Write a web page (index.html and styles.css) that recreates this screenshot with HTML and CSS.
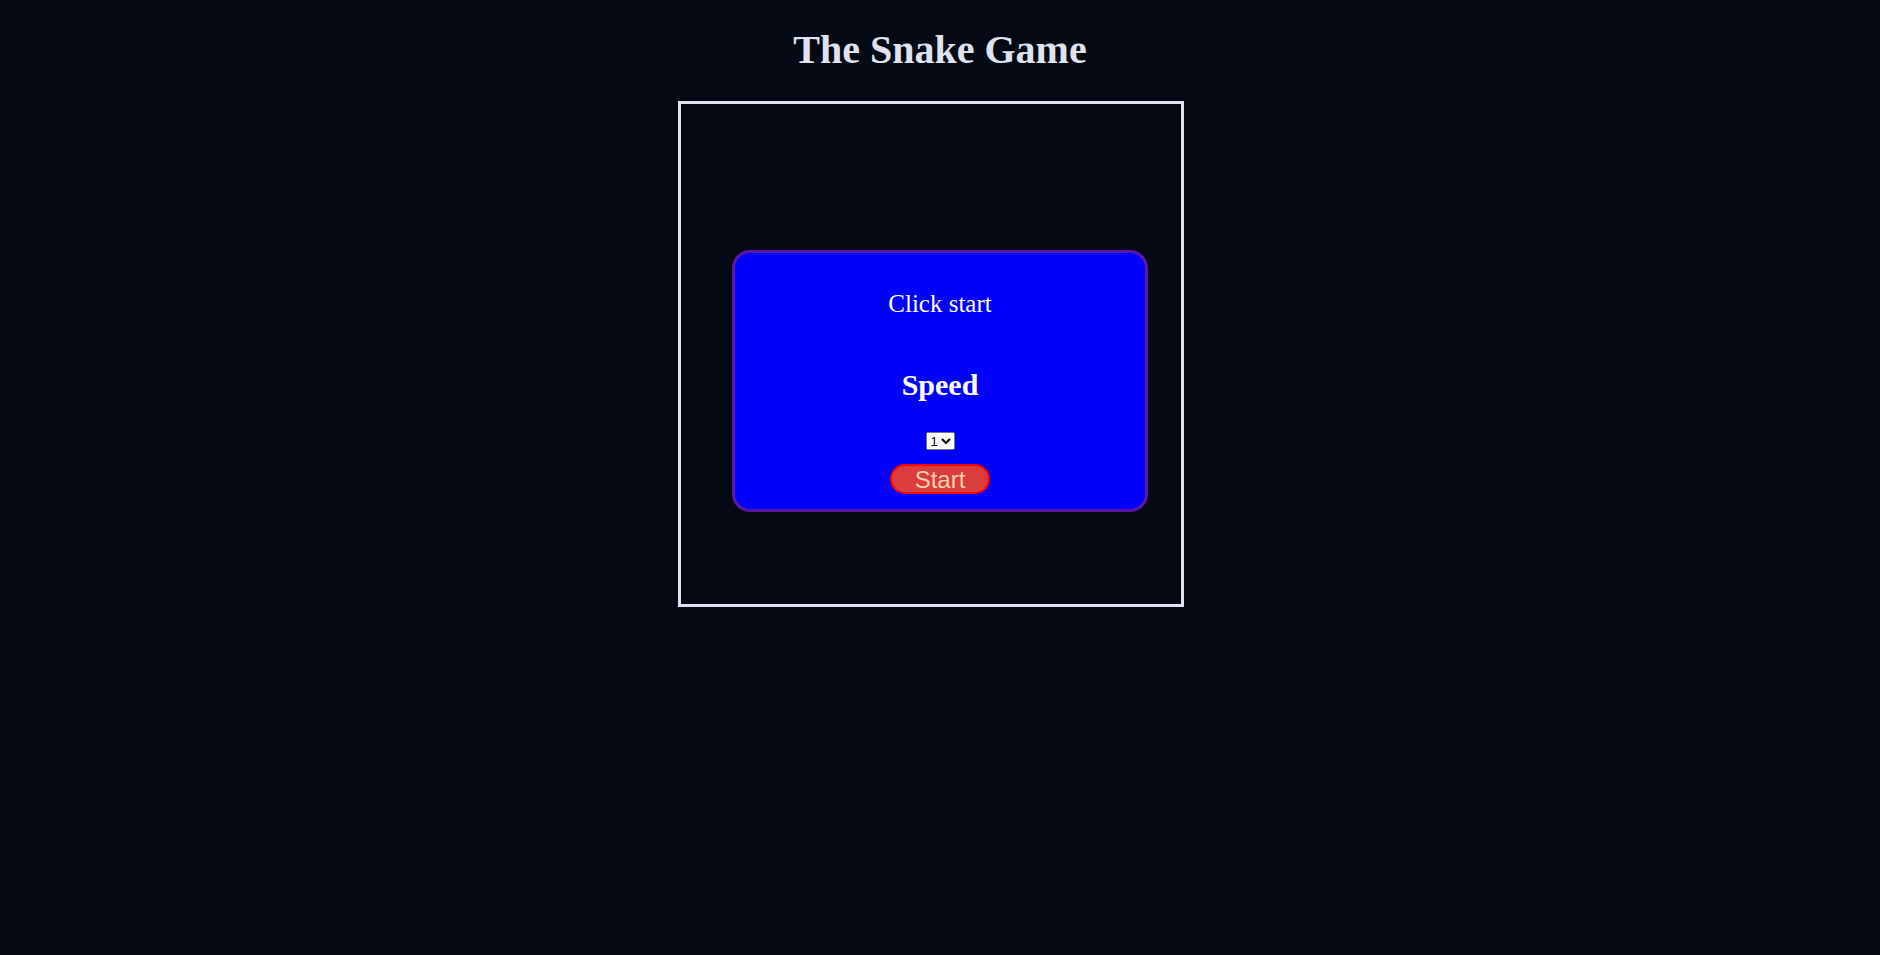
FILE: index.html
```html
<!DOCTYPE html>
<html lang="en">
<head>
<meta charset="utf-8">
<title>The Snake Game</title>
<link rel="stylesheet" href="styles.css">
</head>
<body>
<h1 class="title">The Snake Game</h1>
<div class="stage">
  <div class="board"></div>
  <div class="overlay">
    <p class="message">Click start</p>
    <h2 class="speed-label">Speed</h2>
    <select class="speed-select">
      <option>1</option>
      <option>2</option>
      <option>3</option>
    </select>
    <button class="start-btn">Start</button>
  </div>
</div>
</body>
</html>
```

FILE: styles.css
```css
html, body {
  margin: 0;
  padding: 0;
}
body {
  background: #050913;
  font-family: "Liberation Serif", "Times New Roman", serif;
  color: #dfe3ef;
  min-height: 955px;
}
.title {
  margin: 0;
  padding-top: 27px;
  padding-bottom: 28px;
  font-size: 40px;
  font-weight: bold;
  line-height: 46px;
  text-align: center;
  color: #dfe3ef;
}
.stage {
  position: relative;
  display: flex;
  justify-content: center;
  padding-right: 18px;
}
.board {
  width: 500px;
  height: 500px;
  border: 3px solid #dfe3ef;
  background: #050913;
}
.overlay {
  position: absolute;
  top: 149px;
  left: 50%;
  transform: translateX(-50%);
  width: 410px;
  height: 256px;
  border: 3px solid #5a17a6;
  border-radius: 18px;
  background: #0000ff;
  display: flex;
  flex-direction: column;
  align-items: center;
  color: #ffffff;
}
.message {
  margin: 36.5px 0 0;
  font-size: 25px;
  line-height: 28.75px;
}
.speed-label {
  margin: 50px 0 0;
  font-size: 30px;
  font-weight: bold;
  line-height: 34.5px;
}
.speed-select {
  margin-top: 29.5px;
  width: 29px;
  height: 18px;
  font-family: "Liberation Sans", Arial, sans-serif;
  font-size: 13px;
  padding: 0;
}
.start-btn {
  box-sizing: border-box;
  margin-top: 14px;
  width: 100px;
  height: 30px;
  padding: 2px 0 0;
  border: 2px solid #ff0000;
  border-radius: 15px;
  background: #db3c3c;
  color: #fcd2a6;
  font-family: "Liberation Sans", Arial, sans-serif;
  font-size: 24px;
  line-height: 24px;
}
```
